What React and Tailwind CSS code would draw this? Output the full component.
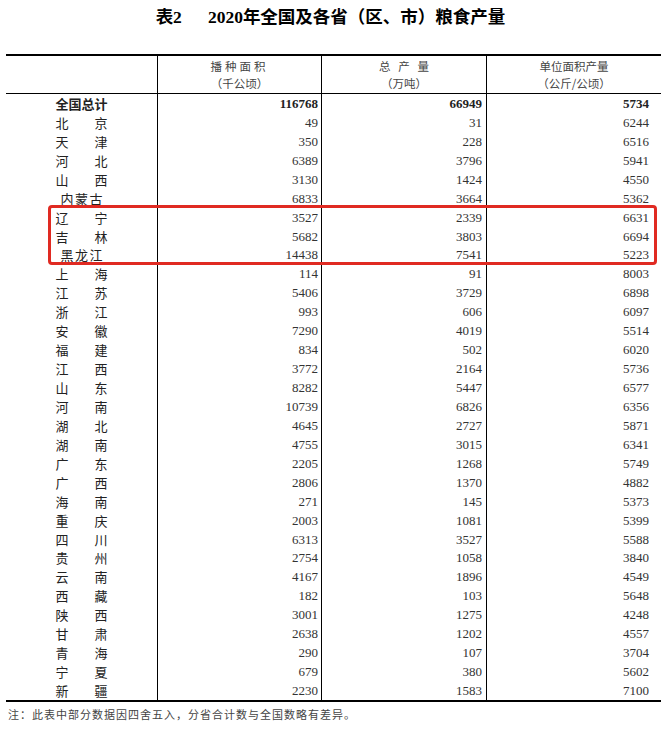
import React from "react"

const rows = [
  ["北京", 49, 31, 6244],
  ["天津", 350, 228, 6516],
  ["河北", 6389, 3796, 5941],
  ["山西", 3130, 1424, 4550],
  ["内蒙古", 6833, 3664, 5362],
  ["辽宁", 3527, 2339, 6631],
  ["吉林", 5682, 3803, 6694],
  ["黑龙江", 14438, 7541, 5223],
  ["上海", 114, 91, 8003],
  ["江苏", 5406, 3729, 6898],
  ["浙江", 993, 606, 6097],
  ["安徽", 7290, 4019, 5514],
  ["福建", 834, 502, 6020],
  ["江西", 3772, 2164, 5736],
  ["山东", 8282, 5447, 6577],
  ["河南", 10739, 6826, 6356],
  ["湖北", 4645, 2727, 5871],
  ["湖南", 4755, 3015, 6341],
  ["广东", 2205, 1268, 5749],
  ["广西", 2806, 1370, 4882],
  ["海南", 271, 145, 5373],
  ["重庆", 2003, 1081, 5399],
  ["四川", 6313, 3527, 5588],
  ["贵州", 2754, 1058, 3840],
  ["云南", 4167, 1896, 4549],
  ["西藏", 182, 103, 5648],
  ["陕西", 3001, 1275, 4248],
  ["甘肃", 2638, 1202, 4557],
  ["青海", 290, 107, 3704],
  ["宁夏", 679, 380, 5602],
  ["新疆", 2230, 1583, 7100],
]

const cjk = "font-['Noto_Sans_CJK_SC',sans-serif]"
const serif = "font-['Liberation_Serif','Noto_Sans_CJK_SC',serif]"
const grid = "grid grid-cols-[151px_164px_165px_175px]"

function Name({ name, bold }) {
  const w = name.length === 3 ? "w-[42px]" : "w-[52px]"
  return (
    <div className="flex justify-center">
      <span className={`flex justify-between ${w} ${bold ? "font-bold" : ""}`}>
        {name.split("").map((c, i) => (
          <span key={i}>{c}</span>
        ))}
      </span>
    </div>
  )
}

function Row({ r, bold }) {
  const num = `${serif} border-l border-black h-full flex items-center justify-end ${bold ? "font-bold text-[#222]" : ""}`
  return (
    <div className={`${grid} h-[18.94px] items-center text-[13px] leading-none text-[#333]`}>
      <div className={`${cjk} text-[#222]`}>
        <Name name={r[0]} bold={bold} />
      </div>
      <div className={`${num} pr-[3px]`}>{r[1]}</div>
      <div className={`${num} pr-[4px]`}>{r[2]}</div>
      <div className={`${num} pr-[12px]`}>{r[3]}</div>
    </div>
  )
}

export default function App() {
  return (
    <div className="w-[661px] h-[730px] bg-white overflow-hidden">
      <div className={`h-[54px] pt-[6px] flex justify-center gap-[26px] text-[17.5px] leading-[22px] font-bold text-black ${serif}`}>
        <span>表2</span>
        <span>2020年全国及各省（区、市）粮食产量</span>
      </div>

      <div className="relative ml-[6px]">
        <div className="border-t-2 border-b-2 border-black">
          <div className={`${grid} h-[38px] border-b border-black text-[11.5px] leading-[17px] text-[#444] ${cjk}`}>
            <div />
            <div className="border-l border-black flex flex-col items-center justify-center">
              <span className="tracking-[3px]">播种面积</span>
              <span>（千公顷）</span>
            </div>
            <div className="border-l border-black flex flex-col items-center justify-center">
              <span className="whitespace-pre">总   产   量</span>
              <span>（万吨）</span>
            </div>
            <div className="border-l border-black flex flex-col items-center justify-center">
              <span>单位面积产量</span>
              <span>（公斤/公顷）</span>
            </div>
          </div>
          <Row r={["全国总计", 116768, 66949, 5734]} bold />
          {rows.map((r) => (
            <Row key={r[0]} r={r} />
          ))}
        </div>

        <div className="absolute left-[42px] top-[151px] w-[609px] h-[60px] border-[3px] border-[#e02a22] rounded-[4px] pointer-events-none" />
      </div>

      <div className={`pl-[8px] pt-[4px] text-[11px] tracking-[1px] text-[#444] ${cjk}`}>
        注：此表中部分数据因四舍五入，分省合计数与全国数略有差异。
      </div>
    </div>
  )
}
